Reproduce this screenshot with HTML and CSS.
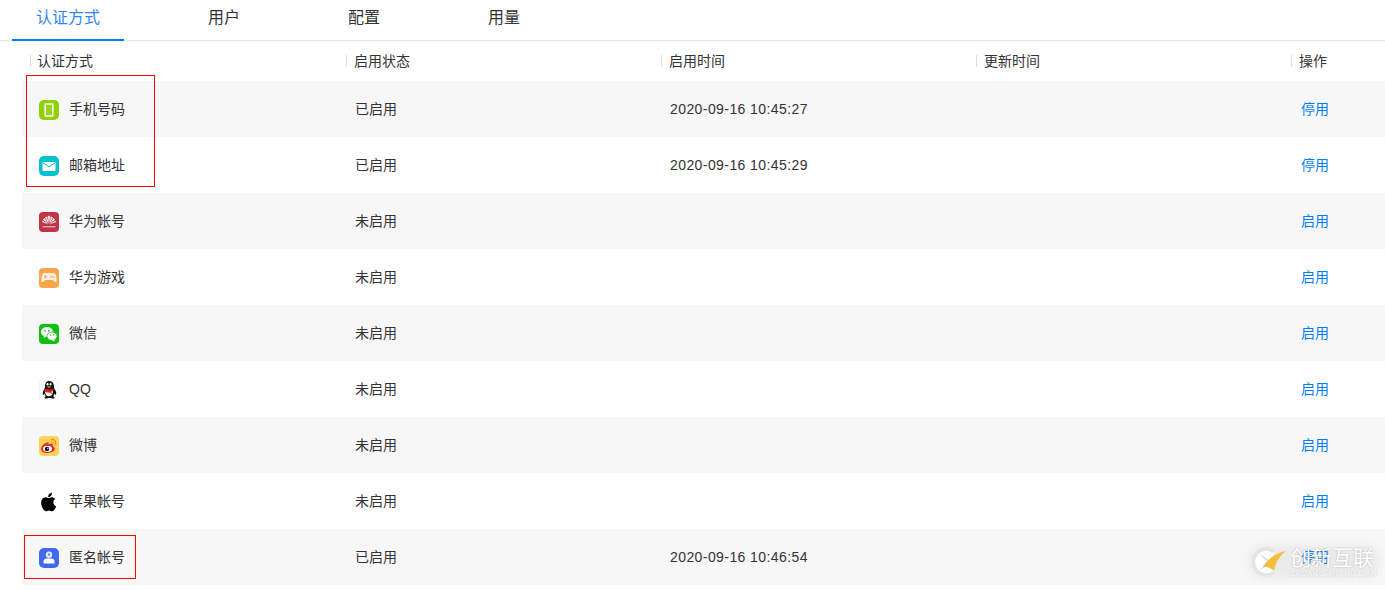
FILE: index.html
```html
<!DOCTYPE html>
<html lang="zh-CN">
<head>
<meta charset="utf-8">
<title>认证方式</title>
<link rel="stylesheet" href="styles.css">
</head>
<body>
<nav class="tabs">
  <a class="tab active">认证方式</a>
  <a class="tab">用户</a>
  <a class="tab">配置</a>
  <a class="tab">用量</a>
</nav>
<section class="table">
  <div class="head">
    <div class="th">认证方式</div>
    <div class="th">启用状态</div>
    <div class="th">启用时间</div>
    <div class="th">更新时间</div>
    <div class="th">操作</div>
  </div>
  <div class="row">
    <div class="name"><svg class="icon" viewBox="0 0 20 20"><rect width="20" height="20" rx="5" fill="#8fd000"/><rect x="6.200" y="4" width="7.600" height="12" rx=".6" fill="#9ad617" stroke="#fff" stroke-width="1.600"/></svg>手机号码</div>
    <div class="cell">已启用</div><div class="cell time">2020-09-16 10:45:27</div><div class="cell"></div><a class="op">停用</a>
  </div>
  <div class="row">
    <div class="name"><svg class="icon" viewBox="0 0 20 20"><rect width="20" height="20" rx="5" fill="#00c2d1"/><rect x="3.500" y="6" width="13" height="9" rx="1" fill="#fff"/><path d="M4 6.800 10 10.800 16 6.800" fill="none" stroke="#00c2d1" stroke-width="1"/></svg>邮箱地址</div>
    <div class="cell">已启用</div><div class="cell time">2020-09-16 10:45:29</div><div class="cell"></div><a class="op">停用</a>
  </div>
  <div class="row">
    <div class="name"><svg class="icon" viewBox="0 0 20 20"><rect width="20" height="20" rx="4" fill="#bd3547"/><g fill="#f6e3e6"><path d="M9.800 12 8.700 4.500 10 3.500Z"/><path d="M10.200 12 11.300 4.500 10 3.500Z"/><path d="M9.500 12 6 5.500 8.200 4.500Z"/><path d="M10.500 12 14 5.500 11.800 4.500Z"/><path d="M9.200 12.300 3.900 7.500 5.500 6Z"/><path d="M10.800 12.300 16.100 7.500 14.500 6Z"/><path d="M9 12.500 3 10 3.700 8.500Z"/><path d="M11 12.500 17 10 16.300 8.500Z"/></g><rect x="3.500" y="14" width="13" height="1.400" fill="#e2a6af"/></svg>华为帐号</div>
    <div class="cell">未启用</div><div class="cell"></div><div class="cell"></div><a class="op">启用</a>
  </div>
  <div class="row">
    <div class="name"><svg class="icon" viewBox="0 0 20 20"><rect width="20" height="20" rx="4" fill="#f7a54c"/><path d="M5.500 5h9c1.500 0 2.300 1 2.500 2.300l.7 5.200c.2 1.500-1.400 2.300-2.400 1.100L13.500 12h-7l-1.800 1.600c-1 1.200-2.600.4-2.400-1.100L3 7.300C3.200 6 4 5 5.500 5Z" fill="#fdeedd"/><path d="M5 8.800h2.800M6.400 7.400v2.800" stroke="#e8a76a" stroke-width="1"/><circle cx="12.300" cy="8.800" r=".9" fill="#e8a76a"/><circle cx="14.600" cy="8.800" r=".9" fill="#e8a76a"/></svg>华为游戏</div>
    <div class="cell">未启用</div><div class="cell"></div><div class="cell"></div><a class="op">启用</a>
  </div>
  <div class="row">
    <div class="name"><svg class="icon" viewBox="0 0 20 20"><rect width="20" height="20" rx="4" fill="#12c012"/><ellipse cx="8" cy="8" rx="6" ry="5" fill="#fff"/><path d="M5 11.500 4.500 14 7.500 12.500Z" fill="#fff"/><ellipse cx="13" cy="12.200" rx="5" ry="4.200" fill="#fff" stroke="#12c012" stroke-width=".8"/><path d="M15 15.500 16 17.500 13 16.200Z" fill="#fff"/><circle cx="6" cy="6.800" r=".9" fill="#12c012"/><circle cx="9.800" cy="6.800" r=".9" fill="#12c012"/><circle cx="11.500" cy="11" r=".7" fill="#12c012"/><circle cx="14.700" cy="11" r=".7" fill="#12c012"/></svg>微信</div>
    <div class="cell">未启用</div><div class="cell"></div><div class="cell"></div><a class="op">启用</a>
  </div>
  <div class="row">
    <div class="name"><svg class="icon" viewBox="0 0 20 20"><rect x=".5" y=".5" width="19" height="19" rx="2" fill="#fff" stroke="#f4f4f4"/><path d="M10 1C14 1 15 4 15 7c0 1 .4 1.600 1.200 2.900 1.200 2 1.400 4.500.6 4.800-.5.200-1-.4-1.300-1-.3 1.100-.8 2-1.500 2.600 1 .3 1.700.9 1.500 1.600-.3.700-2 .7-3.200.3-.9-.3-2.700-.3-3.600 0-1.200.4-2.900.4-3.200-.3-.2-.7.500-1.300 1.500-1.600-.7-.6-1.200-1.500-1.500-2.600-.3.600-.8 1.200-1.300 1-.8-.3-.6-2.800.6-4.800C5.600 8.600 6 8 6 7c0-3 1-6 4-6Z" fill="#111"/><path d="M6.600 9.500c2 1.200 4.800 1.200 6.800 0 1 2.800.5 6.300-3.400 6.700-3.900-.4-4.400-3.900-3.400-6.700Z" fill="#fff"/><path d="M5.700 8.500c2.300 1.500 6.300 1.500 8.600 0l.4 1.900c-.6.400-1.400.8-2.200 1l.5 2.500-2-1.300c-2.200.2-4.300-.3-5.600-1.300Z" fill="#e2231a"/><path d="M7.800 6.800c1.100-.7 3.300-.7 4.400 0-.7 1.100-3.700 1.100-4.400 0Z" fill="#f7b500"/><ellipse cx="8.500" cy="4.300" rx="1" ry="1.300" fill="#fff"/><ellipse cx="11.500" cy="4.300" rx="1" ry="1.300" fill="#fff"/></svg>QQ</div>
    <div class="cell">未启用</div><div class="cell"></div><div class="cell"></div><a class="op">启用</a>
  </div>
  <div class="row">
    <div class="name"><svg class="icon" viewBox="0 0 20 20"><rect width="20" height="20" rx="4" fill="#fdd25a"/><path d="M8.500 6.500C5 7.500 1.800 10.500 2 13.200c.2 2.300 3.200 3.900 6.800 3.800 3.700-.1 7-2 7-4.400 0-1.500-1.400-1.900-2-2.200.5-1.300.2-2.200-.8-2.500-1-.3-2.200 0-3.300.5.200-1-.2-2.800-1.200-1.900Z" fill="#e6232c"/><ellipse cx="8.500" cy="12.800" rx="4.600" ry="3.100" fill="#fff"/><circle cx="8" cy="13" r="2.200" fill="#111"/><circle cx="8.800" cy="12.400" r=".6" fill="#fff"/><path d="M12.500 3.500c2.800-.5 5 2 4.200 5" fill="none" stroke="#f0921c" stroke-width="1.300" stroke-linecap="round"/><path d="M12.800 6c1.200-.2 2 .8 1.700 2" fill="none" stroke="#f0921c" stroke-width="1" stroke-linecap="round"/></svg>微博</div>
    <div class="cell">未启用</div><div class="cell"></div><div class="cell"></div><a class="op">启用</a>
  </div>
  <div class="row">
    <div class="name"><svg class="icon" viewBox="0 0 20 20"><path d="M14.300 10.600c0-2.300 1.800-3.400 1.900-3.500-1-1.500-2.600-1.700-3.200-1.800-1.400-.1-2.600.8-3.300.8-.7 0-1.800-.8-3-.8-1.600 0-3 .9-3.800 2.300-1.600 2.800-.4 7 1.200 9.300.8 1.100 1.700 2.400 3 2.300 1.200 0 1.600-.8 3-.8s1.800.8 3 .8c1.300 0 2.100-1.100 2.800-2.300.9-1.300 1.200-2.600 1.300-2.700-.1 0-2.700-1-2.900-4ZM12 3.700c.6-.8 1.100-1.900 1-3-.9 0-2.100.6-2.800 1.400-.6.700-1.100 1.900-1 2.900 1.100.1 2.200-.5 2.800-1.300Z" fill="#000"/></svg>苹果帐号</div>
    <div class="cell">未启用</div><div class="cell"></div><div class="cell"></div><a class="op">启用</a>
  </div>
  <div class="row">
    <div class="name"><svg class="icon" viewBox="0 0 20 20"><rect width="20" height="20" rx="5" fill="#4169f0"/><circle cx="10" cy="6.800" r="3.200" fill="#dfe6fd"/><circle cx="10" cy="6.600" r="1" fill="#4169f0"/><path d="M4.500 15.500v-2c0-1.800 1.500-3 3-3h5c1.500 0 3 1.200 3 3v2Z" fill="#fff"/></svg>匿名帐号</div>
    <div class="cell">已启用</div><div class="cell time">2020-09-16 10:46:54</div><div class="cell"></div><a class="op">停用</a>
  </div>
</section>
<div class="mark mark-top"></div>
<div class="mark mark-bottom"></div>
<div class="watermark">
  <div class="wm-halo"></div>
  <svg class="wm-logo" viewBox="0 0 40 40"><path d="M26 9.500A13 13 0 1 0 26 30.500" fill="#fff" stroke="#e4e4e4" stroke-width="3.500"/><path d="M10 11 19 19.500 11 29 20 23 27 30 23 19Z" fill="#dedede"/><path d="M15 25C20 17 27 11 38 9 31 14 28 20 26 29 23 26 19 24 15 25Z" fill="#f6bd3c"/></svg>
  <div class="wm-text">
    <div class="wm-cn">创新互联</div>
    <div class="wm-en">CHUANG XIN HU LIAN</div>
  </div>
</div>
</body>
</html>
```
FILE: styles.css
```css
* { box-sizing: border-box; }
html, body { margin: 0; padding: 0; }
body {
  width: 1385px;
  height: 590px;
  overflow: hidden;
  position: relative;
  background: #fff;
  color: #333;
  font-family: "Liberation Sans", "Noto Sans CJK SC", sans-serif;
  font-size: 14px;
}
.tabs {
  display: flex;
  gap: 60px;
  height: 41px;
  padding-left: 12px;
  border-bottom: 1px solid #e2e2e2;
}
.tab {
  height: 41px;
  padding: 6px 24px 0;
  line-height: 24px;
  font-size: 16px;
  color: #333;
}
.tab.active {
  color: #2f86f6;
  border-bottom: 2px solid #007dff;
}
.table { margin-left: 22px; }
.head, .row {
  display: grid;
  grid-template-columns: 324px 315px 315px 315px 94px;
}
.head { height: 40px; align-items: center; }
.th {
  margin-left: 8px;
  padding-left: 6px;
  height: 12px;
  line-height: 12px;
  border-left: 1px solid #dedede;
  color: #333;
}
.head .th:not(:first-child) { margin-left: 0; padding-left: 7px; }
.row { height: 56px; align-items: center; line-height: 20px; }
.row:nth-child(even) { background: #f7f7f7; }
.name { display: flex; align-items: center; gap: 10px; padding-left: 17px; height: 20px; color: #333; }
.icon { width: 20px; height: 20px; flex: none; transform: translateY(1px); }
.cell { padding-left: 9px; height: 20px; color: #333; }
.time { letter-spacing: .42px; }
.op { padding-left: 10px; height: 20px; color: #007dff; }
.mark { position: absolute; border: 1px solid #f00; }
.mark-top { left: 26px; top: 75px; width: 129px; height: 112px; }
.mark-bottom { left: 24px; top: 535px; width: 112px; height: 44px; }
.watermark {
  position: absolute;
  left: 1248px;
  top: 542px;
  display: flex;
  gap: 2px;
  align-items: center;
}
.wm-halo {
  position: absolute;
  left: 0;
  top: 4px;
  width: 132px;
  height: 32px;
  border-radius: 16px;
  background: rgba(0,0,0,.05);
  filter: blur(5px);
}
.wm-logo { position: relative; width: 40px; height: 40px; flex: none; }
.wm-text { position: relative; color: #fff; text-shadow: 0 0 2px rgba(0,0,0,.25); }
.wm-cn { font-size: 21px; line-height: 24px; white-space: nowrap; }
.wm-en { font-size: 7px; line-height: 8px; letter-spacing: .75px; white-space: nowrap; }
```
